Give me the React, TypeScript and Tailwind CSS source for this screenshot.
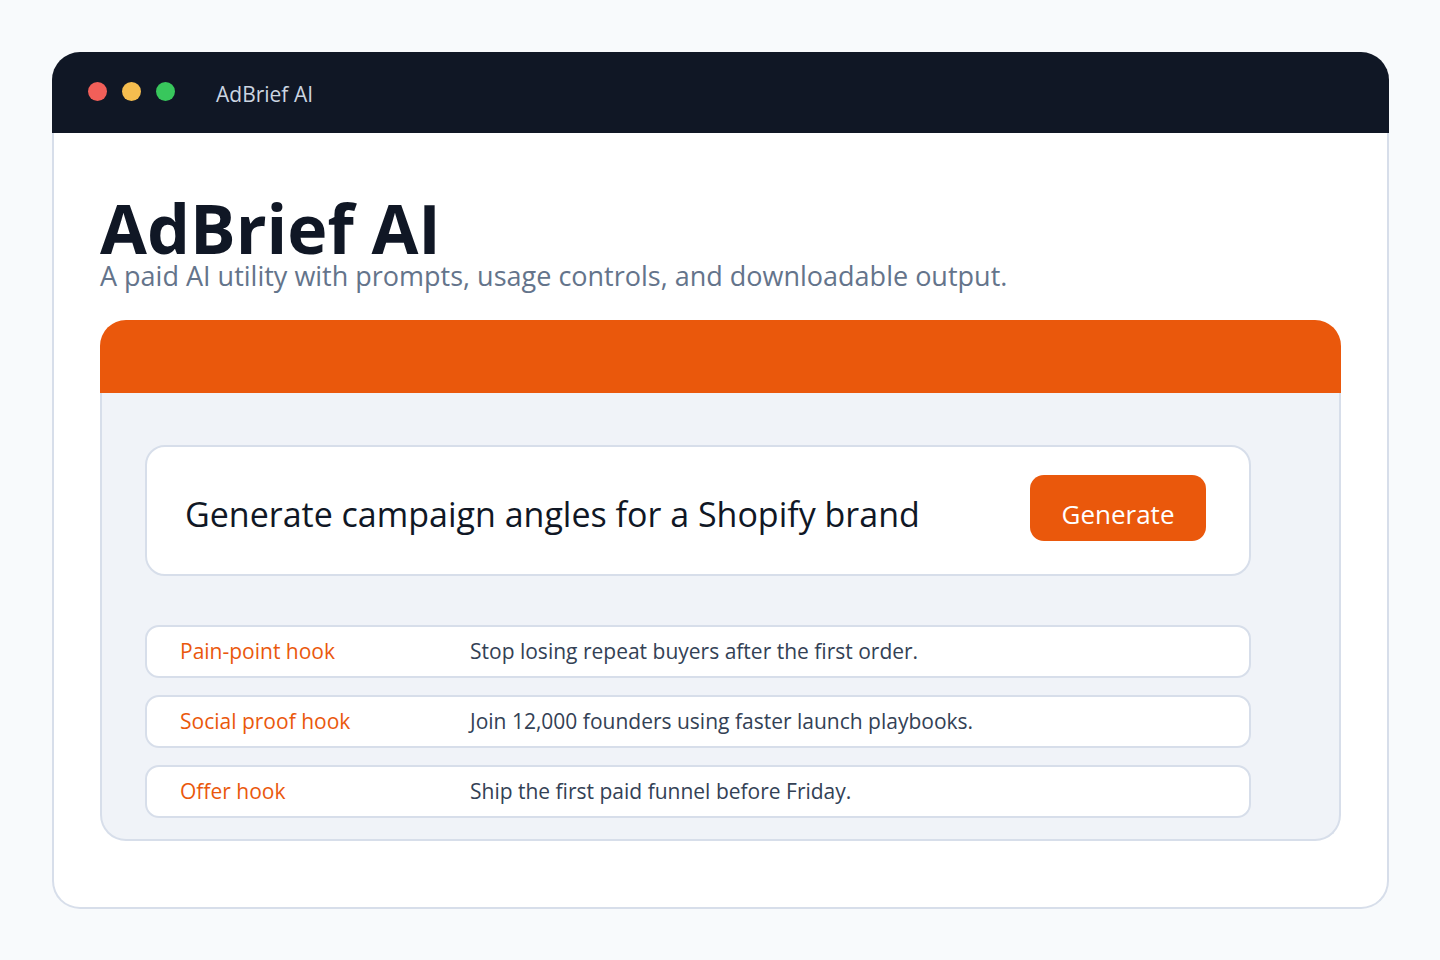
import { useState } from 'react';

const lights = ['bg-[#f15f59]', 'bg-[#f5bd4f]', 'bg-[#38c75c]'];

const hooks = [
  { label: 'Pain-point hook', text: 'Stop losing repeat buyers after the first order.' },
  { label: 'Social proof hook', text: 'Join 12,000 founders using faster launch playbooks.' },
  { label: 'Offer hook', text: 'Ship the first paid funnel before Friday.' },
];

export default function App() {
  return (
    <div className="min-h-screen bg-[#f8fafc] pt-[52px] pr-[51px] pb-[51px] pl-[52px] font-['Open_Sans','Noto_Sans',sans-serif] text-[#101725]">
      <TitleBar />
      <main className="rounded-b-[28px] border-x-2 border-b-2 border-[#d7deea] bg-white px-[46px] pt-[63px] pb-[66px]">
        <h1 className="text-[68px] leading-[64px] font-bold">AdBrief AI</h1>
        <p className="text-[27px] leading-[32px] text-[#64748b]">
          A paid AI utility with prompts, usage controls, and downloadable output.
        </p>
        <section className="mt-[28px]">
          <div className="h-[73px] rounded-t-[26px] bg-[#ea580c]" />
          <div className="rounded-b-[26px] border-x-2 border-b-2 border-[#d7deea] bg-[#f0f3f8] pt-[52px] pr-[88px] pb-[21px] pl-[43px]">
            <PromptForm />
            <dl className="mt-[49px] flex flex-col gap-[17px]">
              {hooks.map((hook) => (
                <div
                  key={hook.label}
                  className="flex h-[53px] items-center rounded-[14px] border-2 border-[#d7deea] bg-white px-[33px] pb-[2px] text-[21px] leading-[28px]"
                >
                  <dt className="w-[290px] shrink-0 text-[#ea580c]">{hook.label}</dt>
                  <dd className="text-[#334155]">{hook.text}</dd>
                </div>
              ))}
            </dl>
          </div>
        </section>
      </main>
    </div>
  );
}

function TitleBar() {
  return (
    <header className="flex h-[81px] items-center rounded-t-[28px] bg-[#101725] px-[36px] pb-[2px]">
      <div className="flex gap-[15px]">
        {lights.map((color) => (
          <span key={color} className={`size-[19px] rounded-full ${color}`} />
        ))}
      </div>
      <span className="ml-[41px] pt-[4px] text-[21px] leading-[28px] text-[#cbd5e1]">AdBrief AI</span>
    </header>
  );
}

function PromptForm() {
  const [prompt, setPrompt] = useState('Generate campaign angles for a Shopify brand');

  return (
    <form
      onSubmit={(e) => e.preventDefault()}
      className="flex h-[131px] items-start rounded-[20px] border-2 border-[#d7deea] bg-white pr-[43px] pl-[38px]"
    >
      <input
        type="text"
        aria-label="Prompt"
        value={prompt}
        onChange={(e) => setPrompt(e.target.value)}
        className="mt-[42px] h-[50px] min-w-0 flex-1 bg-transparent text-[34px] outline-none"
      />
      <button
        type="submit"
        className="mt-[28px] ml-6 h-[66px] w-[176px] rounded-[14px] bg-[#ea580c] pt-[12px] text-[26px] leading-[36px] text-white"
      >
        Generate
      </button>
    </form>
  );
}
